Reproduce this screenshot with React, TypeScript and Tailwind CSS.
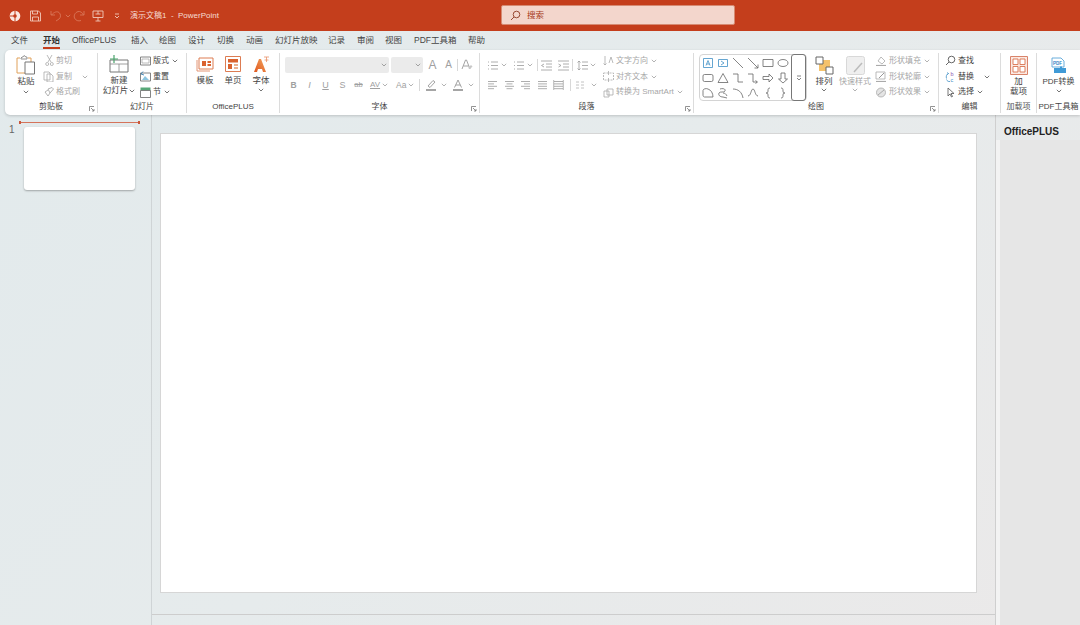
import React from 'react';

const FONT = "font-['Liberation_Sans','Noto_Sans_CJK_SC',sans-serif]";

const Chevron: React.FC<{ className?: string; color?: string }> = ({ className = '', color = '#666' }) => (
  <svg width="6" height="4" viewBox="0 0 6 4" className={`shrink-0 ${className}`}>
    <path d="M.8.8 3 3 5.2.8" fill="none" stroke={color} strokeWidth=".9" />
  </svg>
);

const Ico: React.FC<{ w?: number; h?: number; children: React.ReactNode; className?: string }> = ({ w = 12, h = 12, children, className = '' }) => (
  <svg width={w} height={h} viewBox={`0 0 ${w} ${h}`} fill="none" className={`shrink-0 ${className}`}>
    {children}
  </svg>
);

const Launcher: React.FC = () => (
  <svg width="6" height="6" viewBox="0 0 6 6" className="shrink-0">
    <path d="M.5 5V.5H5M2 2l3 3M5 3v2H3" fill="none" stroke="#777" strokeWidth=".8" />
  </svg>
);

const Group: React.FC<{ w: string; label: string; launcher?: boolean; border?: boolean; labelColor?: string; children: React.ReactNode }> = ({
  w,
  label,
  launcher,
  border = true,
  labelColor = 'text-[#444]',
  children,
}) => (
  <div className={`${w} shrink-0 flex flex-col h-[60px] ${border ? 'border-r border-[#dcdcdc]' : ''}`}>
    <div className="flex-1 flex min-h-0">{children}</div>
    <div className="h-[13px] flex items-center justify-center relative">
      <span className={`text-[8px] leading-none whitespace-nowrap ${labelColor}`}>{label}</span>
      {launcher && (
        <span className="absolute right-[2px] bottom-[1px]">
          <Launcher />
        </span>
      )}
    </div>
  </div>
);

const SmallRow: React.FC<{ icon: React.ReactNode; label: string; muted?: boolean; chevron?: boolean; className?: string }> = ({
  icon,
  label,
  muted,
  chevron,
  className = '',
}) => (
  <div className={`h-[16px] flex items-center ${className}`}>
    {icon}
    <span className={`ml-[2px] text-[8px] leading-none whitespace-nowrap ${muted ? 'text-[#a6a6a6]' : 'text-[#444]'}`}>{label}</span>
    {chevron && <Chevron className="ml-[3px]" color={muted ? '#aaa' : '#666'} />}
  </div>
);

const Lines: React.FC<{ kind: 'left' | 'center' | 'right' | 'full' | 'dist' }> = ({ kind }) => {
  const rows: Record<string, [number, number][]> = {
    left: [[1, 10], [1, 7], [1, 10], [1, 7]],
    center: [[1, 10], [2.5, 8.5], [1, 10], [2.5, 8.5]],
    right: [[1, 10], [4, 10], [1, 10], [4, 10]],
    full: [[1, 10], [1, 10], [1, 10], [1, 10]],
    dist: [[1, 10], [1, 10], [1, 10], [1, 10]],
  };
  return (
    <Ico w={11} h={10}>
      {rows[kind].map(([a, b], i) => (
        <path key={i} d={`M${a} ${1.5 + i * 2.4}H${b}`} stroke="#999" strokeWidth=".8" />
      ))}
      {kind === 'dist' && <path d="M.7 0v10M10.3 0v10" stroke="#999" strokeWidth=".7" />}
    </Ico>
  );
};

const TitleBar: React.FC = () => (
  <div className="h-[31px] bg-[#c43e1c] flex items-center relative">
    <svg width="12" height="12" viewBox="0 0 12 12" className="ml-[9px]">
      <circle cx="6" cy="6" r="5.3" fill="#fbe9e2" />
      <path d="M6 1v10M1 6h5" stroke="#c43e1c" strokeWidth="1" />
      <circle cx="6" cy="6" r="1.8" fill="#c43e1c" />
    </svg>
    <svg width="11" height="12" viewBox="0 0 11 12" fill="none" stroke="#f2cabb" strokeWidth=".9" className="ml-[9px]">
      <path d="M.5 1h8l2 2v8H.5zM2.5 1v3h5V1M2.5 11V7h6v4" />
    </svg>
    <svg width="14" height="12" viewBox="0 0 14 12" fill="none" stroke="#d9775a" strokeWidth=".9" className="ml-[9px]">
      <path d="M1 1v4h4M1.5 5C4 2 7 1 9 2.500s2 5 0 6.500L6 11" />
    </svg>
    <Chevron className="ml-[1px]" color="#d9775a" />
    <svg width="12" height="12" viewBox="0 0 12 12" fill="none" stroke="#d9775a" strokeWidth=".9" className="ml-[2px]">
      <path d="M11 1v4H7M10.500 5C9.500 2.500 7 1 5 1.600 2 2.500.6 5.500 1.500 8c1 2.500 4 3.500 6.500 2.500" />
    </svg>
    <svg width="12" height="12" viewBox="0 0 12 12" fill="none" stroke="#f2cabb" strokeWidth=".9" className="ml-[7px]">
      <path d="M1 1h10v6.500H1zM6 7.500V11M3.500 11h5M6 1v3M3.500 4h5" />
    </svg>
    <svg width="6" height="6" viewBox="0 0 6 6" fill="none" stroke="#f2cabb" strokeWidth=".9" className="ml-[10px]">
      <path d="M1 1h4M1 3l2 2 2-2" />
    </svg>
    <span className="ml-[10px] text-[8px] leading-none text-[#f6dcd2] whitespace-nowrap">演示文稿1&nbsp;&nbsp;-&nbsp;&nbsp;PowerPoint</span>
    <div className="absolute left-[501px] top-[5px] w-[234px] h-[20px] bg-[#f3d6cc] rounded-[2px] border border-[#d68a72] flex items-center pl-[8px]">
      <svg width="11" height="11" viewBox="0 0 11 11" fill="none" stroke="#8e3a22" strokeWidth=".9">
        <circle cx="6.500" cy="4.500" r="3.300" />
        <path d="M4 7 1 10" />
      </svg>
      <span className="ml-[6px] text-[8.5px] leading-none text-[#a63a20]">搜索</span>
    </div>
  </div>
);

const TABS: [string, string][] = [
  ['文件', 'w-[32px]'],
  ['开始', 'w-[29px]'],
  ['OfficePLUS', 'w-[59px]'],
  ['插入', 'w-[28px]'],
  ['绘图', 'w-[29px]'],
  ['设计', 'w-[29px]'],
  ['切换', 'w-[29px]'],
  ['动画', 'w-[29px]'],
  ['幻灯片放映', 'w-[53px]'],
  ['记录', 'w-[29px]'],
  ['审阅', 'w-[28px]'],
  ['视图', 'w-[29px]'],
  ['PDF工具箱', 'w-[54px]'],
  ['帮助', 'w-[30px]'],
];

const Tabs: React.FC = () => (
  <div className="h-[19px] flex items-center pl-[11px]">
    {TABS.map(([t, w]) => (
      <div key={t} className={`${w} shrink-0 flex items-center`}>
        <span className={`relative text-[8.5px] leading-none whitespace-nowrap ${t === '开始' ? 'font-bold text-[#333]' : 'text-[#444]'}`}>
          {t}
          {t === '开始' && <span className="absolute left-0 right-0 top-[11px] h-[2px] bg-[#c43e1c]" />}
        </span>
      </div>
    ))}
  </div>
);

const Clipboard: React.FC = () => (
  <Group w="w-[93px]" label="剪贴板" launcher>
    <div className="w-[38px] flex flex-col items-center pt-[2px] pl-[4px]">
      <svg width="20" height="20" viewBox="0 0 20 20" fill="none">
        <path d="M4 3H1v15h9" stroke="#e0a15a" strokeWidth="1" />
        <path d="M12 3h3v4" stroke="#e0a15a" strokeWidth="1" />
        <path d="M5 3l1-1h1l1-1.500L10 2h1v2H5z" stroke="#888" strokeWidth=".9" />
        <path d="M9 7h9.500v12H9z" fill="#fff" stroke="#777" strokeWidth="1" />
      </svg>
      <span className="mt-[1px] text-[8.5px] leading-[11px] text-[#444]">粘贴</span>
      <Chevron className="mt-[3px]" />
    </div>
    <div className="flex flex-col">
      <SmallRow
        muted
        label="剪切"
        className="pl-[2px]"
        icon={
          <Ico w={9} h={11}>
            <path d="M2 0l4 7M7 0 3 7" stroke="#aaa" strokeWidth=".8" />
            <circle cx="2.200" cy="9" r="1.500" stroke="#aaa" strokeWidth=".8" />
            <circle cx="6.800" cy="9" r="1.500" stroke="#aaa" strokeWidth=".8" />
          </Ico>
        }
      />
      <div className="flex items-center">
        <SmallRow
          muted
          label="复制"
          icon={
            <Ico w={11} h={11}>
              <path d="M1 1h5l1 1v7H1z M4 3h4l2 2v6H4z" stroke="#aaa" strokeWidth=".8" fill="#fff" />
            </Ico>
          }
        />
        <Chevron className="ml-[10px]" color="#aaa" />
      </div>
      <SmallRow
        muted
        label="格式刷"
        className="pl-[1px]"
        icon={
          <Ico w={10} h={10}>
            <path d="M4 2l4-1.500L9.500 2 6 6zM4 3 1 5l3 4 2-3" stroke="#aaa" strokeWidth=".9" />
          </Ico>
        }
      />
    </div>
  </Group>
);

const Slides: React.FC = () => (
  <Group w="w-[89px]" label="幻灯片">
    <div className="w-[42px] flex flex-col items-center pt-[2px]">
      <svg width="20" height="18" viewBox="0 0 20 18" fill="none">
        <path d="M1 5h18v12H1z" stroke="#777" strokeWidth="1" />
        <path d="M1 9h18M10 9v8" stroke="#888" strokeWidth=".8" />
        <path d="M5 0v8M1 4h8" stroke="#49a36b" strokeWidth="1.200" />
      </svg>
      <span className="mt-[2px] text-[8.5px] leading-[10px] text-[#444]">新建</span>
      <span className="flex items-center text-[8.5px] leading-[11px] text-[#444] whitespace-nowrap">
        幻灯片
        <Chevron className="ml-[1px]" />
      </span>
    </div>
    <div className="flex flex-col">
      <SmallRow
        label="版式"
        chevron
        icon={
          <Ico w={11} h={10}>
            <path d="M.5 1h10v8H.5z" stroke="#777" strokeWidth=".9" />
            <path d="M2 3h7v4H2z" stroke="#aaa" strokeWidth=".8" />
          </Ico>
        }
      />
      <SmallRow
        label="重置"
        icon={
          <Ico w={11} h={11}>
            <path d="M.5 2h10v8H.5z" stroke="#777" strokeWidth=".9" />
            <path d="M2 9l3-4 4 4z" fill="#8cc5e0" />
            <path d="M1 3l2-2.500M1 3l3 1" stroke="#3a7fb0" strokeWidth=".9" />
          </Ico>
        }
      />
      <SmallRow
        label="节"
        chevron
        icon={
          <Ico w={11} h={11}>
            <path d="M.5 .5h10v3H.5z" fill="#58a878" />
            <path d="M.5 3.500h10v7H.5z" stroke="#777" strokeWidth=".9" />
          </Ico>
        }
      />
    </div>
  </Group>
);

const Big: React.FC<{ w: string; icon: React.ReactNode; children: React.ReactNode; className?: string }> = ({ w, icon, children, className = '' }) => (
  <div className={`${w} flex flex-col items-center ${className}`}>
    <div className="h-[20px] flex items-center justify-center">{icon}</div>
    <div className="mt-[1px] flex flex-col items-center text-[8.5px] leading-[10px] text-[#444] whitespace-nowrap">{children}</div>
  </div>
);

const OfficePlus: React.FC = () => (
  <Group w="w-[93px]" label="OfficePLUS">
    <div className="flex pt-[1px] pl-[5px] gap-[2px]">
      <Big
        w="w-[26px]"
        icon={
          <svg width="18" height="15" viewBox="0 0 18 15" fill="none">
            <path d="M1 3v11h13" stroke="#e08a66" strokeWidth=".9" />
            <path d="M3 1h14v11H3z" fill="#fff" stroke="#dd7c52" strokeWidth="1" />
            <path d="M6 4h4v5H6z" fill="#d9622e" />
            <path d="M11.500 4H15v2h-3.500zM11.500 7H15v2h-3.500z" fill="#d9622e" />
          </svg>
        }
      >
        模板
      </Big>
      <Big
        w="w-[26px]"
        icon={
          <svg width="16" height="16" viewBox="0 0 16 16" fill="none">
            <path d="M.5.5h15v15H.5z" fill="#fff" stroke="#dd7c52" />
            <path d="M3 3h10v3.500H3zM3 8h4v5H3z" fill="#d9622e" />
            <path d="M9 8h4v2H9zM9 11h4v2H9z" fill="#eab08f" />
          </svg>
        }
      >
        单页
      </Big>
      <Big
        w="w-[26px]"
        icon={
          <svg width="17" height="17" viewBox="0 0 17 17" fill="none">
            <defs>
              <linearGradient id="fontA" x1="0" y1="1" x2="1" y2="0">
                <stop offset="0" stopColor="#e0561c" />
                <stop offset="1" stopColor="#f2a35e" />
              </linearGradient>
            </defs>
            <path d="M1 16 6 3h2l5 13h-3l-1-3H5l-1 3z" fill="url(#fontA)" />
            <path d="M11 1h5M13.500 1v5M11.500 4h4" stroke="#e9926a" strokeWidth=".8" />
          </svg>
        }
      >
        <span>字体</span>
        <Chevron className="mt-[3px]" />
      </Big>
    </div>
  </Group>
);

const Glyph: React.FC<{ className?: string; children: React.ReactNode }> = ({ className = '', children }) => (
  <span className={`text-[#a0a0a0] text-[9px] leading-none flex items-center justify-center ${className}`}>{children}</span>
);

const FontGroup: React.FC = () => (
  <Group w="w-[200px]" label="字体" launcher>
    <div className="flex flex-col pl-[5px] pt-[4px]">
      <div className="flex items-center h-[16px]">
        <div className="w-[104px] h-[16px] bg-[#ebebeb] rounded-[2px] flex items-center justify-end pr-[2px]">
          <Chevron color="#999" />
        </div>
        <div className="ml-[2px] w-[32px] h-[16px] bg-[#ebebeb] rounded-[2px] flex items-center justify-end pr-[2px]">
          <Chevron color="#999" />
        </div>
        <Glyph className="ml-[4px] w-[11px] !text-[12px] font-light">A</Glyph>
        <Glyph className="ml-[5px] w-[11px] !text-[10px]">A</Glyph>
        <span className="ml-[3px] w-px h-[12px] bg-[#d8d8d8]" />
        <svg width="12" height="12" viewBox="0 0 12 12" fill="none" className="ml-[3px]">
          <path d="M1 10 4.500 1h1L9 10M2.500 7h5" stroke="#999" strokeWidth=".9" />
          <path d="M7 9l3-3 1.500 1.500L9 10z" fill="#c8c8c8" />
        </svg>
      </div>
      <div className="flex items-center h-[16px] mt-[4px] pl-[5px]">
        <Glyph className="w-[7px] font-bold !text-[8.5px]">B</Glyph>
        <Glyph className="ml-[9px] w-[7px] italic">I</Glyph>
        <Glyph className="ml-[9px] w-[7px] underline">U</Glyph>
        <Glyph className="ml-[10px] w-[7px]">S</Glyph>
        <Glyph className="ml-[7px] w-[11px] line-through !text-[7.5px]">ab</Glyph>
        <span className="ml-[6px] flex flex-col items-center text-[#a0a0a0] text-[8px] leading-[8px] underline">AV</span>
        <Chevron className="ml-[2px]" color="#aaa" />
        <Glyph className="ml-[8px] !text-[8.5px]">Aa</Glyph>
        <Chevron className="ml-[2px]" color="#aaa" />
        <span className="ml-[5px] w-px h-[12px] bg-[#d8d8d8]" />
        <svg width="12" height="12" viewBox="0 0 12 12" fill="none" className="ml-[5px]">
          <path d="M3 7 8 1.500 10 3 5 8.500z" stroke="#999" strokeWidth=".9" />
          <path d="M1 11h10" stroke="#8f8f8f" strokeWidth="1.600" />
        </svg>
        <Chevron className="ml-[4px]" color="#aaa" />
        <svg width="12" height="12" viewBox="0 0 12 12" fill="none" className="ml-[5px]">
          <path d="M2.500 8.500 6 1l3.500 7.500M3.800 6h4.400" stroke="#999" strokeWidth=".9" />
          <path d="M1 11h10" stroke="#8f8f8f" strokeWidth="1.600" />
        </svg>
        <Chevron className="ml-[4px]" color="#aaa" />
      </div>
    </div>
  </Group>
);

const ParaIcon: React.FC<{ d: string }> = ({ d }) => (
  <Ico w={11} h={11}>
    <path d={d} stroke="#999" strokeWidth=".8" />
  </Ico>
);

const Paragraph: React.FC = () => (
  <Group w="w-[214px]" label="段落" launcher>
    <div className="flex flex-col pl-[7px] pt-[4px] w-[123px]">
      <div className="flex items-center h-[16px]">
        <ParaIcon d="M1 2h1M4 2h7M1 5.500h1M4 5.500h7M1 9h1M4 9h7" />
        <Chevron className="ml-[3px]" color="#aaa" />
        <span className="ml-[6px]">
          <ParaIcon d="M1 2h1M4 2h7M1 5.500h1M4 5.500h7M1 9h1M4 9h7" />
        </span>
        <Chevron className="ml-[3px]" color="#aaa" />
        <span className="ml-[4px] w-px h-[12px] bg-[#d8d8d8]" />
        <span className="ml-[3px]">
          <ParaIcon d="M0 1h11M5 4h6M5 7h6M0 10h11M3 4 .5 5.500 3 7" />
        </span>
        <span className="ml-[6px]">
          <ParaIcon d="M0 1h11M5 4h6M5 7h6M0 10h11M.5 4 3 5.500.5 7" />
        </span>
        <span className="ml-[3px] w-px h-[12px] bg-[#d8d8d8]" />
        <span className="ml-[4px]">
          <ParaIcon d="M5 2h6M5 5.500h6M5 9h6M2 1v9M.5 2.500 2 1l1.500 1.500M.5 8.500 2 10l1.500-1.500" />
        </span>
        <Chevron className="ml-[2px]" color="#aaa" />
      </div>
      <div className="flex items-center h-[16px] mt-[4px] gap-[5.5px]">
        <Lines kind="left" />
        <Lines kind="center" />
        <Lines kind="right" />
        <Lines kind="full" />
        <Lines kind="dist" />
        <span className="w-px h-[12px] bg-[#d8d8d8]" />
        <Ico w={9} h={8}>
          <path d="M0 1h3M0 4h3M0 7h3M5 1h3M5 4h3M5 7h3" stroke="#bbb" strokeWidth=".9" />
        </Ico>
        <Chevron color="#aaa" />
      </div>
    </div>
    <div className="flex flex-col">
      <SmallRow
        muted
        chevron
        label="文字方向"
        icon={
          <Ico w={11} h={11}>
            <path d="M2 1v9M.5 8.500 2 10l1.500-1.500M6 8 8 2l2 6" stroke="#aaa" strokeWidth=".8" />
          </Ico>
        }
      />
      <SmallRow
        muted
        chevron
        label="对齐文本"
        icon={
          <Ico w={11} h={11}>
            <path d="M.5 2h10v7H.5z" stroke="#aaa" strokeWidth=".8" strokeDasharray="2 1" />
            <path d="M5.500 0v4M5.500 7v4" stroke="#aaa" strokeWidth=".8" />
          </Ico>
        }
      />
      <SmallRow
        muted
        chevron
        label="转换为 SmartArt"
        icon={
          <Ico w={11} h={11}>
            <path d="M1 4h5v6H1zM4 2h6v6H4z" stroke="#aaa" strokeWidth=".8" />
          </Ico>
        }
      />
    </div>
  </Group>
);

const SHAPES: string[] = [
  'M1.500 1.500h9v9h-9z M4 8.500 6 3.500l2 5M4.700 7h2.600',
  'M1.500 2.500h9v7h-9z M4 4l3 2-3 2',
  'M1 1l10 10',
  'M1 1l10 10M11 7.500V11H7.500',
  'M1 2.500h10v7H1z',
  'M6 2.500c3 0 5 1.500 5 3.500s-2 3.500-5 3.500S1 8 1 6s2-3.500 5-3.500z',
  'M2.500 2.500h7a1.500 1.500 0 0 1 1.500 1.500v4a1.500 1.500 0 0 1-1.500 1.500h-7A1.500 1.500 0 0 1 1 8V4a1.500 1.500 0 0 1 1.500-1.500z',
  'M6 1.500 11 10.500H1z',
  'M1 2h5v8h5',
  'M1 2h5v8h4M8.500 8.500 10.500 10 8.500 11.500',
  'M1 4.500h6V2l4 4-4 4V7.500H1z',
  'M4 1h4v6h2.500L6 11 1.500 7H4z',
  'M1 3.500C1 2 4 1 6 2c3 1 5 4 5 8H2.500C1.500 10 1 9 1 8z',
  'M3 2c3-1 6 0 5 2S3 4 2 6s1 4 4 4l4 1M6 6c2 0 3 1 4 3',
  'M1 2c5 0 9 3 10 9',
  'M1 9c3 0 3-7 5-7s2 7 5 7',
  'M8 1C6 1 6 2 6 4s-1 2-2 2c1 0 2 0 2 2s0 3 2 3',
  'M4 1c2 0 2 1 2 3s1 2 2 2c-1 0-2 0-2 2s0 3-2 3',
];

const Drawing: React.FC = () => (
  <Group w="w-[245px]" label="绘图" launcher>
    <div className="ml-[5px] mt-[1px] h-[47px] w-[108px] border border-[#d4d4d4] rounded-[4px] flex">
      <div className="flex-1 grid grid-cols-6 grid-rows-3">
        {SHAPES.map((d, i) => (
          <div key={i} className="flex items-center justify-center">
            <svg width="12" height="12" viewBox="0 0 12 12" fill="none">
              <path d={d} stroke={i < 2 ? '#3f8fc5' : '#666'} strokeWidth=".8" />
            </svg>
          </div>
        ))}
      </div>
      <div className="w-[15px] -my-px border border-[#777] rounded-[3px] flex items-center justify-center">
        <svg width="6" height="6" viewBox="0 0 6 6" fill="none" stroke="#666" strokeWidth=".8">
          <path d="M1 1h4M1 3l2 2 2-2" />
        </svg>
      </div>
    </div>
    <div className="w-[30px] ml-[2px] pt-[3px] flex flex-col items-center">
      <svg width="19" height="19" viewBox="0 0 19 19" fill="none">
        <path d="M4 4h11v11H4z" fill="#f5c26b" />
        <path d="M1 1h7v7H1z" fill="#fff" stroke="#666" />
        <path d="M11 11h7v7h-7z" fill="#fff" stroke="#666" />
      </svg>
      <span className="mt-[1px] text-[8.5px] leading-[11px] text-[#444]">排列</span>
      <Chevron className="mt-[1px]" />
    </div>
    <div className="w-[32px] pt-[3px] flex flex-col items-center">
      <svg width="19" height="19" viewBox="0 0 19 19" fill="none">
        <rect x=".5" y=".5" width="18" height="18" rx="2" fill="#efefef" stroke="#d8d8d8" />
        <path d="M8 16 16 7" stroke="#bbb" strokeWidth="1.500" />
      </svg>
      <span className="mt-[1px] text-[8px] leading-[11px] text-[#a6a6a6] whitespace-nowrap">快速样式</span>
      <Chevron className="mt-[1px]" color="#aaa" />
    </div>
    <div className="flex flex-col pl-[4px]">
      <SmallRow
        muted
        chevron
        label="形状填充"
        icon={
          <Ico w={12} h={11}>
            <path d="M3 6 6 2l4 4-3 3z" stroke="#aaa" strokeWidth=".8" />
            <path d="M1 10.500h10" stroke="#aaa" strokeWidth="1.200" />
          </Ico>
        }
      />
      <SmallRow
        muted
        chevron
        label="形状轮廓"
        icon={
          <Ico w={12} h={11}>
            <path d="M1 1h9v7H1z" stroke="#aaa" strokeWidth=".8" />
            <path d="M4 7l5-5" stroke="#999" />
            <path d="M1 10.500h10" stroke="#aaa" strokeWidth="1.200" />
          </Ico>
        }
      />
      <SmallRow
        muted
        chevron
        label="形状效果"
        icon={
          <Ico w={12} h={11}>
            <circle cx="6" cy="5.500" r="4.500" fill="#e4e4e4" stroke="#aaa" strokeWidth=".8" />
            <path d="M3 8l6-5" stroke="#aaa" />
          </Ico>
        }
      />
    </div>
  </Group>
);

const Editing: React.FC = () => (
  <Group w="w-[62px]" label="编辑">
    <div className="flex flex-col pl-[6px]">
      <SmallRow
        label="查找"
        icon={
          <Ico w={11} h={11}>
            <circle cx="6.500" cy="4.500" r="3.300" stroke="#555" strokeWidth=".9" />
            <path d="M4 7 1 10" stroke="#555" strokeWidth=".9" />
          </Ico>
        }
      />
      <div className="flex items-center">
        <SmallRow
          label="替换"
          icon={
            <Ico w={11} h={12}>
              <path d="M3.500 2.500C1.500 3 .8 5.500 1.500 7.500M3.500 2.500 2.300 1.500M3.500 2.500l-1.300 1" stroke="#3f8fc5" strokeWidth=".8" />
              <text x="5.500" y="5" fontSize="5.500" fill="#8a5bb0" fontFamily="Liberation Sans">
                b
              </text>
              <text x="5.500" y="11" fontSize="5.500" fill="#3f8fc5" fontFamily="Liberation Sans">
                c
              </text>
              <path d="M1.500 8.500C2 10 3.500 10.800 5 10.500" stroke="#3f8fc5" strokeWidth=".8" />
            </Ico>
          }
        />
        <Chevron className="ml-[10px]" />
      </div>
      <SmallRow
        label="选择"
        chevron
        icon={
          <Ico w={11} h={11}>
            <path d="M3 1v8l2-2 1.500 3 1-.5L6 6.500h3z" stroke="#555" strokeWidth=".8" />
          </Ico>
        }
      />
    </div>
  </Group>
);

const AddIns: React.FC = () => (
  <Group w="w-[36px]" label="加载项" labelColor="text-[#555]">
    <Big
      w="w-full"
      className="pt-[2px]"
      icon={
        <svg width="18" height="19" viewBox="0 0 18 19" fill="none">
          <path d="M.5.5h17v18H.5z" fill="#fbe9e2" stroke="#d9836a" />
          <path d="M3 3h5v5.500H3zM10 3h5v5.500h-5zM3 10.500h5V16H3zM10 10.500h5V16h-5z" fill="#fff" stroke="#d9734f" strokeWidth=".9" />
        </svg>
      }
    >
      <span>加</span>
      <span>载项</span>
    </Big>
  </Group>
);

const PdfTools: React.FC = () => (
  <Group w="w-[43px]" label="PDF工具箱" border={false}>
    <Big
      w="w-full"
      className="pt-[2px]"
      icon={
        <svg width="17" height="17" viewBox="0 0 17 17" fill="none">
          <path d="M2 1h9l3 3v6H2z" fill="#fff" stroke="#5aa5d8" strokeWidth=".9" />
          <text x="3" y="7.500" fontSize="4.500" fontWeight="700" fill="#2f84c4" fontFamily="Liberation Sans">
            PDF
          </text>
          <path d="M4 11h12v5H4z" fill="#3f9ad6" />
          <path d="M10 9.500h2v2h-2z" fill="#3f9ad6" />
        </svg>
      }
    >
      <span className="mt-[1px] text-[8px]">PDF转换</span>
      <Chevron className="mt-[2px]" />
    </Big>
  </Group>
);

const Ribbon: React.FC = () => (
  <div className="ml-[5px] h-[65px] bg-white rounded-l-[5px] shadow-[0_1px_3px_rgba(0,0,0,0.18)] flex pt-[3px] relative">
    <Clipboard />
    <Slides />
    <OfficePlus />
    <FontGroup />
    <Paragraph />
    <Drawing />
    <Editing />
    <AddIns />
    <PdfTools />
  </div>
);

const SlidePane: React.FC = () => (
  <div className="w-[152px] shrink-0 border-r border-[#cfd4d6] pt-[6px] pl-[9px]">
    <div className="ml-[10px] w-[121px] h-[3px] flex items-center justify-between">
      <span className="w-[2px] h-[3px] bg-[#c9583c]" />
      <span className="flex-1 h-px bg-[#d5735a]" />
      <span className="w-[2px] h-[3px] bg-[#c9583c]" />
    </div>
    <div className="flex">
      <span className="text-[10px] leading-[11px] text-[#666] w-[15px]">1</span>
      <div className="mt-[3px] w-[111px] h-[63px] bg-white rounded-[3px] shadow-[0_1px_2px_rgba(0,0,0,0.3)]" />
    </div>
  </div>
);

const Editor: React.FC = () => (
  <div className="flex-1 flex flex-col min-w-0 border-r border-[#cfcfcf]">
    <div className="flex-1 pt-[18px] pl-[8px]">
      <div className="w-[817px] h-[460px] bg-white border border-[#d6d6d6]" />
    </div>
    <div className="h-[11px] border-t border-[#cdcdcd]" />
  </div>
);

const SidePanel: React.FC = () => (
  <div className="w-[84px] shrink-0 flex flex-col">
    <div className="h-[25px] pl-[8px] pt-[8px] flex items-center">
      <span className="text-[10px] leading-none font-bold text-[#222]">OfficePLUS</span>
    </div>
    <div className="flex-1 flex">
      <div className="w-[4px] bg-[#f3f3f3]" />
      <div className="flex-1 bg-[#e6e6e6]" />
    </div>
  </div>
);

const App: React.FC = () => (
  <div className={`${FONT} w-[1080px] h-[625px] overflow-hidden flex flex-col bg-[linear-gradient(135deg,#e2eaec_0%,#e6ebec_50%,#ebe9e9_100%)]`}>
    <TitleBar />
    <Tabs />
    <Ribbon />
    <div className="flex-1 flex min-h-0">
      <SlidePane />
      <Editor />
      <SidePanel />
    </div>
  </div>
);

export default App;
